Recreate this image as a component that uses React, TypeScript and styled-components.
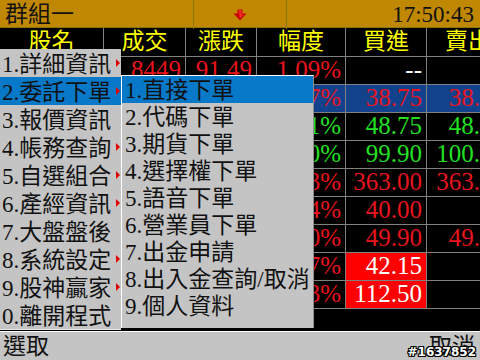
import React from "react";
import styled, { createGlobalStyle } from "styled-components";

const Global = createGlobalStyle`
  html, body { margin: 0; padding: 0; background: #000; }
  body { overflow: hidden; }
  * { box-sizing: border-box; }
`;

const SERIF = `"Liberation Serif", "Noto Sans CJK TC", serif`;
const CJK = `"Liberation Serif", "Noto Sans CJK TC", sans-serif`;

const Screen = styled.div`
  width: 480px;
  height: 360px;
  position: relative;
  overflow: hidden;
  background: #000;
  display: flex;
  flex-direction: column;
`;

const TopBar = styled.div`
  display: grid;
  grid-template-columns: 194px 93px 1fr;
  height: 28px;
  flex: none;
  background: #c08800;
  border-bottom: 1px solid #8a7600;
`;

const TopCell = styled.div<{ $align: string; $divider?: boolean }>`
  display: flex;
  align-items: center;
  justify-content: ${(p) => p.$align};
  border-right: ${(p) => (p.$divider ? "1px solid #8a7600" : "none")};
  padding: 0 6px 0 5px;
  color: #111;
`;

const Title = styled.span`
  font-family: ${CJK};
  font-size: 23px;
  line-height: 29px;
`;

const Clock = styled.span`
  font-family: ${SERIF};
  font-size: 23px;
  line-height: 28px;
`;

const Table = styled.div`
  width: 510px;
  display: flex;
  flex-direction: column;
  flex: none;
`;

const Row = styled.div<{ $h: number; $bg?: string }>`
  display: grid;
  grid-template-columns: 104px 82px 71px 89px 81px 83px;
  height: ${(p) => p.$h}px;
  border-bottom: 1px solid #808080;
  background: ${(p) => p.$bg || "transparent"};
`;

const HeadCell = styled.div`
  border-right: 1px solid #808080;
  color: #ffff00;
  font-family: ${CJK};
  font-size: 23px;
  line-height: 27px;
  text-align: center;
  white-space: nowrap;
  overflow: hidden;
`;

const Cell = styled.div<{ $color?: string; $bg?: string }>`
  border-right: 1px solid #808080;
  color: ${(p) => p.$color || "#fff"};
  background: ${(p) => p.$bg || "transparent"};
  font-family: ${SERIF};
  font-size: 25px;
  line-height: 23px;
  padding: 1px 4px 0 0;
  text-align: right;
  white-space: nowrap;
  overflow: hidden;
`;

const Filler = styled.div`
  flex: 1;
`;

const BottomBar = styled.div`
  height: 29px;
  flex: none;
  background: #c4c4c4;
  border-top: 1px solid #fff;
  display: flex;
  justify-content: space-between;
  align-items: center;
  padding: 0 5px 0 3px;
  color: #111;
  font-family: ${CJK};
  font-size: 23px;
  line-height: 27px;
`;

const Menu = styled.div`
  position: absolute;
  left: 0;
  top: 49px;
  width: 121px;
  height: 281px;
  background: #c4c4c4;
  border-bottom: 1px solid #e8e8e8;
`;

const MenuItem = styled.div<{ $active?: boolean }>`
  position: relative;
  height: 28px;
  padding-left: 2px;
  background: ${(p) => (p.$active ? "#0878c8" : "transparent")};
  color: #111;
  font-family: ${CJK};
  font-size: 23px;
  line-height: 31px;
  white-space: nowrap;
`;

const Caret = styled.span`
  position: absolute;
  right: 1px;
  top: 10px;
  width: 0;
  height: 0;
  border-left: 4px solid #e00000;
  border-top: 4px solid transparent;
  border-bottom: 4px solid transparent;
`;

const SubMenu = styled.div`
  position: absolute;
  left: 121px;
  top: 75px;
  width: 193px;
  height: 253px;
  background: #c4c4c4;
  border-top: 1px solid #fff;
  border-left: 1px solid #fff;
  border-right: 1px solid #8c8c8c;
`;

const SubItem = styled.div<{ $active?: boolean }>`
  height: 27px;
  padding-left: 3px;
  background: ${(p) => (p.$active ? "#0878c8" : "transparent")};
  color: #111;
  font-family: ${CJK};
  font-size: 23px;
  line-height: 29px;
  white-space: nowrap;
`;

const Watermark = styled.div`
  position: absolute;
  right: 4px;
  bottom: 1px;
  color: #fff;
  font-family: "DejaVu Sans", sans-serif;
  font-weight: bold;
  font-size: 12px;
  line-height: 14px;
  text-shadow: 1px 0 0 #000, -1px 0 0 #000, 0 1px 0 #000, 0 -1px 0 #000,
    1px 1px 0 #000, -1px -1px 0 #000, 1px -1px 0 #000, -1px 1px 0 #000;
`;

const DownArrow = () => (
  <svg width="14" height="12" viewBox="0 0 14 12">
    <path d="M4.5 0.5 H9.5 V4.5 H13.5 L7 11.5 L0.5 4.5 H4.5 Z" fill="#cc0000" />
    <path d="M5.5 1 H8.5 V5.5 H11 L7 9.5 Z" fill="#ff4040" opacity="0.7" />
  </svg>
);

const RED = "#e8141e";
const GREEN = "#22e022";

type Quote = {
  c: [string, string, string, string, string, string];
  color: string;
  bg?: string;
  buyColor?: string;
  buyBg?: string;
};

const quotes: Quote[] = [
  { c: ["", "8449", "91.49", "1.09%", "--", ""], color: RED, buyColor: "#fff" },
  { c: ["", "", "", "0.77%", "38.75", "38.75"], color: RED, bg: "#12428c" },
  { c: ["", "", "", "0.21%", "48.75", "48.75"], color: GREEN },
  { c: ["", "", "", "0.10%", "99.90", "100.00"], color: GREEN },
  { c: ["", "", "", "0.83%", "363.00", "363.00"], color: RED },
  { c: ["", "", "", "1.14%", "40.00", ""], color: RED },
  { c: ["", "", "", "0.20%", "49.90", "49.90"], color: RED },
  { c: ["", "", "", "2.67%", "42.15", ""], color: RED, buyColor: "#fff", buyBg: "#ff0000" },
  { c: ["", "", "", "1.93%", "112.50", ""], color: RED, buyColor: "#fff", buyBg: "#ff0000" },
];

const headers = ["股名", "成交", "漲跌", "幅度", "買進", "賣出"];

const mainMenu: { label: string; sub: boolean }[] = [
  { label: "1.詳細資訊", sub: true },
  { label: "2.委託下單", sub: true },
  { label: "3.報價資訊", sub: false },
  { label: "4.帳務查詢", sub: true },
  { label: "5.自選組合", sub: true },
  { label: "6.產經資訊", sub: true },
  { label: "7.大盤盤後", sub: false },
  { label: "8.系統設定", sub: true },
  { label: "9.股神贏家", sub: true },
  { label: "0.離開程式", sub: false },
];

const subMenu = [
  "1.直接下單",
  "2.代碼下單",
  "3.期貨下單",
  "4.選擇權下單",
  "5.語音下單",
  "6.營業員下單",
  "7.出金申請",
  "8.出入金查詢/取消",
  "9.個人資料",
];

export default function App() {
  return (
    <>
      <Global />
      <Screen>
        <TopBar>
          <TopCell $align="flex-start" $divider>
            <Title>群組一</Title>
          </TopCell>
          <TopCell $align="center" $divider>
            <DownArrow />
          </TopCell>
          <TopCell $align="flex-end">
            <Clock>17:50:43</Clock>
          </TopCell>
        </TopBar>
        <Table>
          <Row $h={29}>
            {headers.map((h) => (
              <HeadCell key={h}>{h}</HeadCell>
            ))}
          </Row>
          {quotes.map((q, i) => (
            <Row key={i} $h={28} $bg={q.bg}>
              {q.c.map((v, j) => (
                <Cell
                  key={j}
                  $color={j === 4 && q.buyColor ? q.buyColor : q.color}
                  $bg={j === 4 ? q.buyBg : undefined}
                >
                  {v}
                </Cell>
              ))}
            </Row>
          ))}
        </Table>
        <Filler />
        <BottomBar>
          <span>選取</span>
          <span>取消</span>
        </BottomBar>

        <Menu>
          {mainMenu.map((m, i) => (
            <MenuItem key={m.label} $active={i === 1}>
              {m.label}
              {m.sub && <Caret />}
            </MenuItem>
          ))}
        </Menu>
        <SubMenu>
          {subMenu.map((s, i) => (
            <SubItem key={s} $active={i === 0}>
              {s}
            </SubItem>
          ))}
        </SubMenu>
        <Watermark>#1637852</Watermark>
      </Screen>
    </>
  );
}
